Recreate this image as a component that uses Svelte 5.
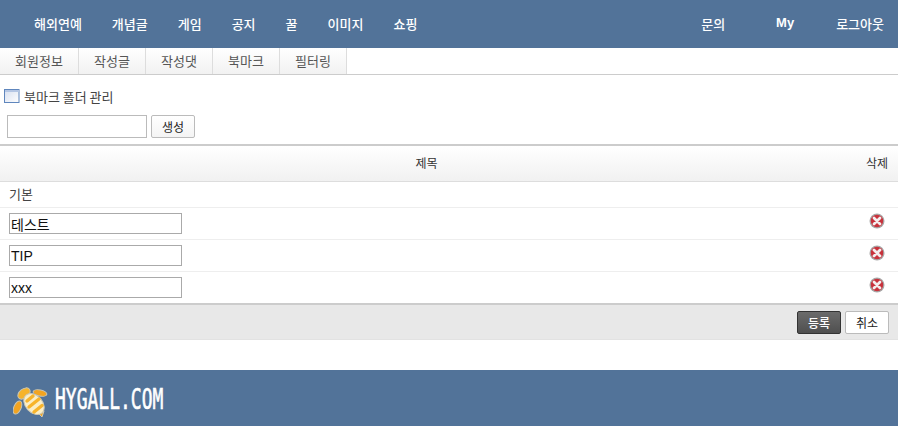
<script>
const menu = ['해외연예', '개념글', '게임', '공지', '꿀', '이미지', '쇼핑']
const tabs = ['회원정보', '작성글', '작성댓', '북마크', '필터링']
const folders = ['테스트', 'TIP', 'xxx']
</script>

{#snippet del()}
  <svg class="del" viewBox="0 0 16 16" width="16" height="16">
    <circle cx="8" cy="8" r="7.5" fill="#a8a8a8" />
    <circle cx="8" cy="8" r="6.2" fill="#c8323c" />
    <path d="M5 5l6 6M11 5l-6 6" stroke="#f4eeee" stroke-width="2.8" stroke-linecap="round" />
  </svg>
{/snippet}

<header class="nav">
  <ul class="menu">
    {#each menu as item}
      <li>{item}</li>
    {/each}
  </ul>
  <ul class="side">
    <li class="ask">문의</li>
    <li class="my">My</li>
    <li class="out">로그아웃</li>
  </ul>
</header>

<nav class="tabs">
  {#each tabs as tab}
    <span class="tab">{tab}</span>
  {/each}
</nav>

<h2 class="title">
  <svg viewBox="0 0 16 14" width="16" height="14">
    <defs>
      <linearGradient id="win" x1="0" y1="0" x2="1" y2="1">
        <stop offset="0" stop-color="#d5deef" />
        <stop offset="1" stop-color="#ffffff" />
      </linearGradient>
    </defs>
    <rect x="0.5" y="0.5" width="14.5" height="13" fill="url(#win)" stroke="#5f86bd" />
    <rect x="1" y="1" width="14" height="2" fill="#b4c6e4" />
  </svg>
  북마크 폴더 관리
</h2>

<div class="create">
  <input class="new" type="text" />
  <button class="make">생성</button>
</div>

<section class="table">
  <div class="head">
    <span class="subject">제목</span>
    <span class="remove">삭제</span>
  </div>
  <div class="base">기본</div>
  {#each folders as name}
    <div class="row">
      <input class="name" type="text" value={name} />
      {@render del()}
    </div>
  {/each}
</section>

<div class="actions">
  <button class="save">등록</button>
  <button class="cancel">취소</button>
</div>

<footer class="foot">
  <svg viewBox="0 0 36 36" width="36" height="36">
    <g fill="#f6b32a" stroke="#c9c6b4" stroke-width="1">
      <ellipse cx="11" cy="12.5" rx="7" ry="4.6" transform="rotate(-38 11 12.5)" />
      <ellipse cx="27" cy="12" rx="7" ry="3" transform="rotate(12 27 12)" fill="#f2a421" />
      <ellipse cx="4.5" cy="26.5" rx="3.6" ry="7" transform="rotate(24 4.5 26.5)" fill="#f2a421" />
      <path d="M25 32l6-2-2 6z" fill="#f2a421" />
      <ellipse cx="21" cy="23" rx="12" ry="8.5" transform="rotate(48 21 23)" fill="#fbeec6" />
    </g>
    <g stroke="#f7b42c" stroke-width="3.4" stroke-linecap="round" fill="none">
      <path d="M14 20l6-5M16 26l10-8M21 31l8-6.5" />
    </g>
  </svg>
  <span class="brand">HYGALL.COM</span>
</footer>

<style>
  :global(body) {
    background: #fff;
    color: #333;
    font-family: "Noto Sans CJK KR", "Liberation Sans", sans-serif;
    font-size: 12px;
  }
  ul {
    list-style: none;
    margin: 0;
    padding: 0;
    display: flex;
    align-items: center;
  }
  .nav {
    height: 48px;
    background: #527399;
    color: #fff;
    display: flex;
    justify-content: space-between;
    align-items: center;
    font-weight: 500;
    font-size: 13px;
    padding-bottom: 2px;
    box-sizing: border-box;
  }
  .menu {
    padding-left: 34px;
    gap: 30px;
  }
  .side {
    padding-right: 14px;
  }
  .ask { margin-right: 51px; }
  .my { margin-right: 42px; margin-top: -1px; font-family: "Liberation Sans", sans-serif; font-weight: 700; }
  .tabs {
    height: 26px;
    display: flex;
    border-bottom: 1px solid #ccc;
  }
  .tab {
    width: 66px;
    text-align: center;
    line-height: 25px;
    border-right: 1px solid #ddd;
    background: linear-gradient(#fff, #f2f2f2);
    color: #555;
    font-size: 13px;
  }
  .tab:first-child { width: 78px; }
  .title {
    margin: 12px 0 0 4px;
    height: 18px;
    display: flex;
    align-items: center;
    gap: 4px;
    font-size: 13px;
    font-weight: 400;
    color: #444;
  }
  .create {
    margin: 10px 0 0 7px;
    display: flex;
    gap: 4px;
  }
  input {
    box-sizing: border-box;
    border: 1px solid #aaa;
    background: #fff;
    margin: 0;
    outline: none;
  }
  .new {
    width: 140px;
    height: 23px;
    border-color: #bbb;
  }
  button {
    box-sizing: border-box;
    font: inherit;
    border-radius: 2px;
    padding: 0;
  }
  .make {
    width: 44px;
    height: 23px;
    border: 1px solid #bbb;
    background: linear-gradient(#fff, #f4f4f4);
    color: #222;
  }
  .table {
    margin-top: 6px;
    border-top: 2px solid #ccc;
    border-bottom: 2px solid #ccc;
  }
  .head {
    height: 33px;
    padding-bottom: 2px;
    display: flex;
    align-items: center;
    background: linear-gradient(#fff, #f1f1f1);
    border-bottom: 1px solid #ddd;
    color: #333;
  }
  .subject {
    flex: 1;
    text-align: center;
    padding-left: 2px;
  }
  .remove {
    width: 47px;
    padding-right: 10px;
    box-sizing: border-box;
    text-align: right;
  }
  .base {
    height: 25px;
    line-height: 23px;
    padding-left: 9px;
    font-size: 13px;
    color: #444;
  }
  .row {
    height: 31px;
    border-top: 1px solid #eee;
    display: flex;
    align-items: center;
    justify-content: space-between;
    padding: 0 13px 0 9px;
  }
  .name {
    width: 173px;
    height: 21px;
    padding: 0 1px;
    font-family: "Liberation Sans", "Noto Sans CJK KR", sans-serif;
    font-size: 14px;
    color: #111;
  }
  .del {
    margin-top: -5px;
  }
  .actions {
    height: 34px;
    background: #e8e8e8;
    border-bottom: 1px solid #e2e2e2;
    display: flex;
    justify-content: flex-end;
    align-items: center;
    gap: 4px;
    padding-right: 9px;
  }
  .save, .cancel {
    height: 23px;
  }
  .save {
    width: 44px;
    background: linear-gradient(#6b6b6b, #4f4f4f);
    border: 1px solid #333;
    color: #fff;
    font-weight: 500;
  }
  .cancel {
    width: 44px;
    background: #fff;
    border: 1px solid #bbb;
    color: #222;
  }
  .foot {
    margin-top: 30px;
    height: 56px;
    background: #527399;
    display: flex;
    align-items: center;
    padding-left: 13px;
    gap: 6px;
  }
  .foot svg {
    margin-top: 2px;
  }
  .brand {
    display: inline-block;
    color: #fff;
    font-family: "DejaVu Sans Mono", monospace;
    font-size: 18px;
    -webkit-text-stroke: 0.4px #fff;
    transform: scaleY(1.55);
    line-height: 1;
    margin-top: 3px;
  }
</style>
